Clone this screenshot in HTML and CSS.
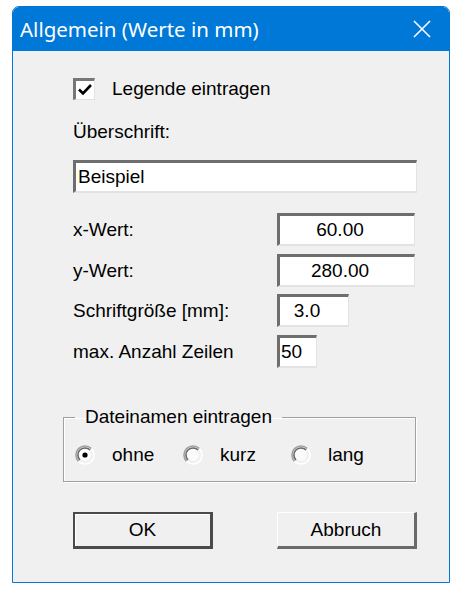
FILE: index.html
```html
<!DOCTYPE html>
<html lang="de">
<head>
<meta charset="utf-8">
<title>Allgemein</title>
<link rel="stylesheet" href="styles.css">
</head>
<body>
<div class="window">
  <div class="titlebar">
    <span class="title">Allgemein (Werte in mm)</span>
    <svg class="close" width="18" height="18" viewBox="0 0 18 18"><path d="M1 1 L17 17 M17 1 L1 17" stroke="#fff" stroke-width="1.6" fill="none"/></svg>
  </div>
  <div class="client">
    <div class="check-row">
      <span class="checkbox"><svg width="16" height="16" viewBox="0 0 16 16"><path d="M2 7.5 L6 11.5 L14 3" stroke="#000" stroke-width="2.6" fill="none"/></svg></span>
      <span>Legende eintragen</span>
    </div>
    <div class="label-top">Überschrift:</div>
    <div class="sunken text-wide">Beispiel</div>
    <div class="field-row first">
      <span class="field-label">x-Wert:</span>
      <span class="sunken num w-138">60.00</span>
    </div>
    <div class="field-row r2">
      <span class="field-label">y-Wert:</span>
      <span class="sunken num w-138">280.00</span>
    </div>
    <div class="field-row r3">
      <span class="field-label">Schriftgröße [mm]:</span>
      <span class="sunken num w-72">3.0</span>
    </div>
    <div class="field-row r4">
      <span class="field-label">max. Anzahl Zeilen</span>
      <span class="sunken left w-40">50</span>
    </div>
    <fieldset class="group">
      <legend>Dateinamen eintragen</legend>
      <div class="radio-row">
        <span class="radio-item">
          <svg class="radio" width="20" height="20" viewBox="0 0 20 20">
            <path d="M3.6 16.4 A9 9 0 0 1 16.4 3.6" stroke="#a0a0a0" stroke-width="1.6" fill="none"/>
            <path d="M5 15 A7 7 0 0 1 15 5" stroke="#696969" stroke-width="1.6" fill="none"/>
            <path d="M16.4 3.6 A9 9 0 0 1 3.6 16.4" stroke="#fff" stroke-width="1.6" fill="none"/>
            <circle cx="10" cy="10" r="6" fill="#fff"/>
            <circle cx="10" cy="10" r="2.6" fill="#000"/>
          </svg>
          <span>ohne</span>
        </span>
        <span class="radio-item">
          <svg class="radio" width="20" height="20" viewBox="0 0 20 20">
            <path d="M3.6 16.4 A9 9 0 0 1 16.4 3.6" stroke="#a0a0a0" stroke-width="1.6" fill="none"/>
            <path d="M5 15 A7 7 0 0 1 15 5" stroke="#696969" stroke-width="1.6" fill="none"/>
            <path d="M16.4 3.6 A9 9 0 0 1 3.6 16.4" stroke="#fff" stroke-width="1.6" fill="none"/>
            <circle cx="10" cy="10" r="6" fill="#fbfbfb"/>
          </svg>
          <span>kurz</span>
        </span>
        <span class="radio-item">
          <svg class="radio" width="20" height="20" viewBox="0 0 20 20">
            <path d="M3.6 16.4 A9 9 0 0 1 16.4 3.6" stroke="#a0a0a0" stroke-width="1.6" fill="none"/>
            <path d="M5 15 A7 7 0 0 1 15 5" stroke="#696969" stroke-width="1.6" fill="none"/>
            <path d="M16.4 3.6 A9 9 0 0 1 3.6 16.4" stroke="#fff" stroke-width="1.6" fill="none"/>
            <circle cx="10" cy="10" r="6" fill="#fbfbfb"/>
          </svg>
          <span>lang</span>
        </span>
      </div>
    </fieldset>
    <div class="buttons">
      <span class="btn default">OK</span>
      <span class="btn">Abbruch</span>
    </div>
  </div>
</div>
</body>
</html>
```

FILE: styles.css
```css
html, body {
  margin: 0;
  padding: 0;
  background: #ffffff;
}

body {
  font-family: "Liberation Sans", Arial, sans-serif;
  font-size: 19px;
  color: #000;
}

.window {
  margin: 6px 0 0 12px;
  width: 438px;
  height: 577px;
  box-sizing: border-box;
  border: 1px solid #0078d7;
  border-radius: 7px 7px 0 0;
  background: #f0f0f0;
  overflow: hidden;
}

.titlebar {
  height: 44px;
  background: #0078d7;
  display: flex;
  align-items: center;
  justify-content: space-between;
  padding: 0 18px 0 7px;
}

.title {
  font-family: "Noto Sans", "Open Sans", sans-serif;
  font-size: 20.5px;
  color: #fff;
  line-height: 24px;
}

.close {
  display: block;
}

.client {
  padding: 27px 32px 0 60px;
}

.check-row {
  display: flex;
  align-items: center;
  height: 22px;
  line-height: 22px;
  gap: 17px;
}

.checkbox {
  width: 22px;
  height: 22px;
  box-sizing: border-box;
  border-style: solid;
  border-width: 3px 1px 1px 3px;
  border-color: #777 #e3e3e3 #e3e3e3 #777;
  background: #fff;
  display: flex;
  align-items: center;
  justify-content: center;
}

.checkbox svg {
  display: block;
}

.label-top {
  margin-top: 21px;
  line-height: 22px;
}

.sunken {
  box-sizing: border-box;
  height: 33px;
  background: #fff;
  border-style: solid;
  border-width: 3px 1px 2px 3px;
  border-color: #6e6e6e #e3e3e3 #e3e3e3 #6e6e6e;
  display: flex;
  align-items: center;
  line-height: 22px;
}

.text-wide {
  margin-top: 17px;
  width: 344px;
  padding-left: 2px;
}

.field-row {
  display: flex;
  align-items: center;
  line-height: 22px;
}

.field-row.first { margin-top: 20px; }
.field-row.r2 { margin-top: 8px; }
.field-row.r3 { margin-top: 7px; }
.field-row.r4 { margin-top: 8px; }

.field-label {
  width: 204px;
}

.num {
  justify-content: center;
  padding-right: 14px;
}

.left {
  padding-left: 1px;
}

.w-138 { width: 138px; }
.w-72 { width: 72px; }
.w-40 { width: 40px; }

.group {
  margin: 38px 0 0 -10px;
  width: 353px;
  box-sizing: border-box;
  border: 1px solid #a0a0a0;
  box-shadow: inset 1px 1px 0 #fff, 1px 1px 0 #fff;
  padding: 0 0 15px 11px;
}

.group legend {
  padding: 0 10px;
  line-height: 22px;
}

.radio-row {
  margin-top: 16px;
  display: flex;
  height: 22px;
  align-items: center;
  line-height: 22px;
}

.radio-item {
  width: 108px;
  display: flex;
  align-items: center;
  gap: 17px;
}

.radio {
  display: block;
  flex: none;
}

.buttons {
  margin-top: 30px;
  width: 344px;
  display: flex;
  justify-content: space-between;
}

.btn {
  width: 140px;
  height: 37px;
  box-sizing: border-box;
  display: flex;
  align-items: center;
  justify-content: center;
  background: #f0f0f0;
  border-style: solid;
  border-width: 1px 3px 3px 1px;
  border-color: #fff #6a6a6a #6a6a6a #fff;
  line-height: 22px;
}

.btn.default {
  border-width: 2px 3px 3px 2px;
  border-color: #4a4a4a;
  box-shadow: inset 1px 1px 0 #fff;
}
```
